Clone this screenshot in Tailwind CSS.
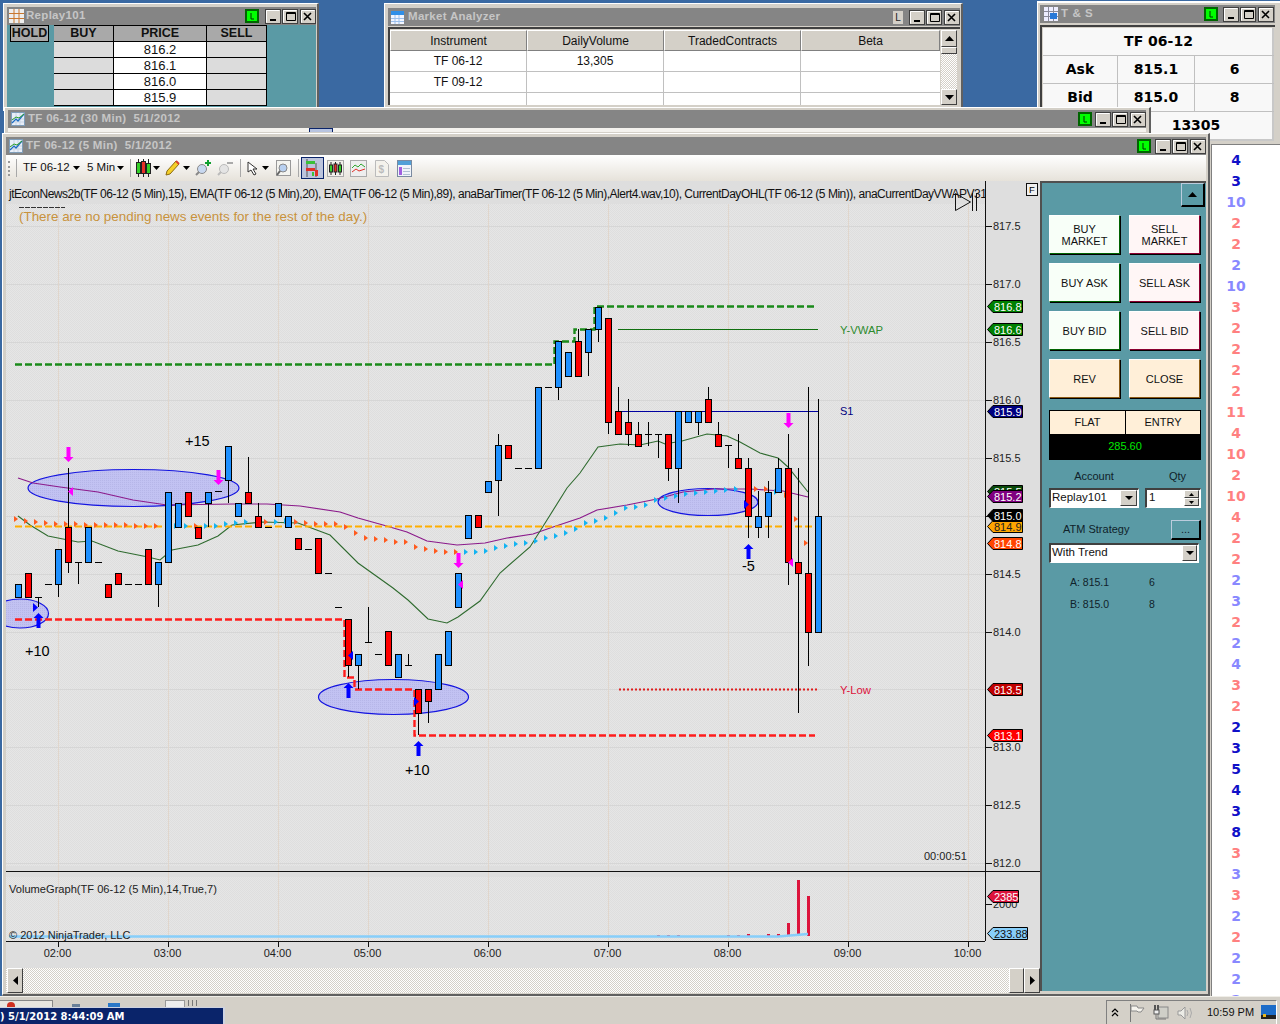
<!DOCTYPE html>
<html lang="en">
<head>
  <meta charset="UTF-8" />
  <title>NinjaTrader Workspace</title>
  <script src="https://cdn.jsdelivr.net/npm/@tailwindcss/browser@4"></script>
</head>
<body class="m-0 overflow-hidden bg-[#3a69a2] font-['Liberation_Sans',Arial,sans-serif] text-[11px] text-[#111]">
  <!-- shared window buttons -->
  <svg width="0" height="0" class="absolute">
    <defs>
      <symbol id="wb" viewBox="0 0 51 15">
        <g fill="#d4d0c8" stroke="#404040"><rect x=".5" y=".5" width="15" height="14"/><rect x="17.5" y=".5" width="15" height="14"/><rect x="35.5" y=".5" width="15" height="14"/></g>
        <g stroke="#fff" fill="none"><path d="M1.5 13.5v-12h13M18.5 13.5v-12h13M36.5 13.5v-12h13"/></g>
        <path d="M5 10h6v2H5z" fill="#000"/>
        <path d="M21.500 3.500h9v8h-9z M21.500 4.500h9" fill="none" stroke="#000"/>
        <path d="M39 4l7 7M46 4l-7 7" stroke="#000" stroke-width="1.600"/>
      </symbol>
      <symbol id="lg" viewBox="0 0 14 14">
        <rect width="14" height="14" fill="#006400"/><rect x="2" y="2" width="10" height="10" fill="#00ff00"/>
        <path d="M6 4v6h3" fill="none" stroke="#003000"/>
      </symbol>
      <symbol id="chartico" viewBox="0 0 14 14">
        <rect x=".5" y=".5" width="13" height="13" fill="#e8eef8" stroke="#7f9db9"/>
        <path d="M1 7h12M1 10h12M5 1v12M9 1v12" stroke="#c8d4e4"/>
        <path d="M1 11l4-4 2 2 6-7" fill="none" stroke="#1c6cc4" stroke-width="1.200"/>
        <path d="M1 8l4-3 3 1 5-4" fill="none" stroke="#2aa02a"/>
      </symbol>
    </defs>
  </svg>

  <!-- Replay101 SuperDOM -->
  <section class="absolute left-[3px] top-[3px] w-[316px] h-[108px] bg-[#d4d0c8] border-t border-l border-white border-r-2 border-r-[#606060] pl-[3px] pr-[1px] pt-[3px]">
    <header class="h-[18px] bg-[#858585] flex items-center pl-[2px]">
      <svg width="15" height="14" viewBox="0 0 15 14"><rect width="15" height="14" fill="#eee"/><path d="M0 4.500h15M0 9.500h15M5 0v14M10 0v14" stroke="#c9772e"/></svg>
      <span class="ml-[2px] font-bold text-[#c6c6c6] text-[11.500px] tracking-[0.3px]">Replay101</span>
      <svg class="ml-auto mr-[6px]" width="14" height="14"><use href="#lg"/></svg>
      <svg width="51" height="15"><use href="#wb"/></svg>
    </header>
    <div class="h-[90px] bg-[#5a9aa5] flex pl-[3px]">
      <div class="w-[39px] h-[17px] bg-[#a9a9a9] border border-black font-bold text-[12.500px] leading-[15px] text-center">HOLD</div>
      <div class="ml-[5px] w-[213px] grid grid-cols-[59px_94px_60px] grid-rows-[17px_16px_16px_16px_16px] text-center text-[13px] leading-[16px]">
        <div class="bg-[#a9a9a9] border-y border-black font-bold text-[12.500px] leading-[15px]">BUY</div>
        <div class="bg-[#a9a9a9] border border-black font-bold text-[12.500px] leading-[15px]">PRICE</div>
        <div class="bg-[#a9a9a9] border-y border-r border-black font-bold text-[12.500px] leading-[15px]">SELL</div>
        <div class="bg-[#dcdcdc] border-b border-black"></div><div class="bg-white border-x border-b border-black">816.2</div><div class="bg-[#dcdcdc] border-b border-r border-black"></div>
        <div class="bg-[#dcdcdc] border-b border-black"></div><div class="bg-white border-x border-b border-black">816.1</div><div class="bg-[#dcdcdc] border-b border-r border-black"></div>
        <div class="bg-[#dcdcdc] border-b border-black"></div><div class="bg-white border-x border-b border-black">816.0</div><div class="bg-[#dcdcdc] border-b border-r border-black"></div>
        <div class="bg-[#dcdcdc] border-b border-black"></div><div class="bg-white border-x border-b border-black">815.9</div><div class="bg-[#dcdcdc] border-b border-r border-black"></div>
      </div>
    </div>
  </section>

  <!-- Market Analyzer -->
  <section class="absolute left-[384px] top-[3px] w-[579px] h-[104px] bg-[#d4d0c8] border-t border-l border-white border-r-2 border-r-[#606060] pl-[3px] pr-[1px] pt-[4px]">
    <header class="h-[18px] bg-[#858585] flex items-center pl-[3px]">
      <svg width="13" height="13" viewBox="0 0 13 13"><rect width="13" height="13" fill="#f2f6ff"/><rect width="13" height="4" fill="#2f8fe8"/><path d="M0 7.500h13M0 10.500h13M4 4v9M8 4v9" stroke="#9cc0ec"/></svg>
      <span class="ml-[4px] font-bold text-[#c6c6c6] text-[11.500px] tracking-[0.3px]">Market Analyzer</span>
      <span class="ml-auto mr-[6px] w-[10px] h-[13px] bg-[#d4d0c8] text-[10px] leading-[14px] text-center text-[#222]">L</span>
      <svg width="51" height="15"><use href="#wb"/></svg>
    </header>
    <div class="flex h-[78px] mt-[1px] bg-[#d4d0c8] border-t-2 border-l-2 border-[#404040] pt-[1px]">
      <div class="w-[550px] bg-white overflow-hidden">
        <div class="grid grid-cols-[137px_137px_137px_139px] grid-rows-[21px_21px_21px_21px] text-center text-[12px] leading-[21px]">
          <div class="bg-[#d4d0c8] border border-t-white border-l-white border-[#808080] leading-[20px]">Instrument</div><div class="bg-[#d4d0c8] border border-t-white border-l-white border-[#808080] leading-[20px]">DailyVolume</div><div class="bg-[#d4d0c8] border border-t-white border-l-white border-[#808080] leading-[20px]">TradedContracts</div><div class="bg-[#d4d0c8] border border-t-white border-l-white border-[#808080] leading-[20px]">Beta</div>
          <div class="border-r border-b border-[#c0c0c0]">TF 06-12</div><div class="border-r border-b border-[#c0c0c0]">13,305</div><div class="border-r border-b border-[#c0c0c0]"></div><div class="border-b border-[#c0c0c0]"></div>
          <div class="border-r border-b border-[#c0c0c0]">TF 09-12</div><div class="border-r border-b border-[#c0c0c0]"></div><div class="border-r border-b border-[#c0c0c0]"></div><div class="border-b border-[#c0c0c0]"></div>
          <div class="border-r border-[#c0c0c0]"></div><div class="border-r border-[#c0c0c0]"></div><div class="border-r border-[#c0c0c0]"></div><div></div>
        </div>
      </div>
      <div class="w-[16px] flex flex-col bg-[repeating-conic-gradient(#ffffff_0_25%,#d4d0c8_0_50%)] bg-[length:2px_2px] ml-[1px]">
        <div class="h-[17px] bg-[#d4d0c8] border border-t-white border-l-white border-[#404040] flex items-center justify-center"><svg width="9" height="5"><path d="M4.500 0L9 5H0z"/></svg></div>
        <div class="h-[7px] bg-[#d4d0c8] border border-t-white border-l-white border-[#404040]"></div>
        <div class="mt-auto h-[16px] bg-[#d4d0c8] border border-t-white border-l-white border-[#404040] flex items-center justify-center"><svg width="9" height="5"><path d="M0 0h9L4.500 5z"/></svg></div>
      </div>
    </div>
  </section>

  <!-- T & S -->
  <section class="absolute left-[1037px] top-[1px] w-[243px] h-[996px] bg-[#d4d0c8] border-t-2 border-l border-white pl-[2px] pt-[2px]">
    <header class="h-[18px] w-[235px] bg-[#858585] flex items-center pl-[4px] pr-[1px]">
      <svg width="14" height="14" viewBox="0 0 14 14"><rect width="14" height="14" fill="#eef"/><path d="M0 4.500h14M0 9.500h14M4.500 0v14M9.500 0v14" stroke="#8a8a9a"/><rect x="6" y="6" width="7" height="6" fill="#2878d8"/></svg>
      <span class="ml-[3px] font-bold text-[#c6c6c6] text-[11.500px] tracking-[0.6px]">T &amp; S</span>
      <svg class="ml-auto mr-[5px]" width="14" height="14"><use href="#lg"/></svg>
      <svg width="51" height="15"><use href="#wb"/></svg>
    </header>
    <div class="mt-[2px] w-[235px] h-[118px] border-t-2 border-l-2 border-[#404040] pl-[1px] pt-[1px]">
      <div class="w-[231px] h-[113px] grid grid-cols-[75px_77px_79px] grid-rows-[28px_28px_28px_29px] bg-[#f8f8f8] border-r-2 border-b-2 border-[#c8c8c8] font-['DejaVu_Sans',sans-serif] font-bold text-[14px] leading-[27px] text-center text-black">
        <div class="col-span-3 border-b border-[#c0c0c0]">TF 06-12</div>
        <div class="border-r border-b border-[#c0c0c0]">Ask</div><div class="border-r border-b border-[#c0c0c0]">815.1</div><div class="border-b border-[#c0c0c0]">6</div>
        <div class="border-r border-b border-[#c0c0c0]">Bid</div><div class="border-r border-b border-[#c0c0c0]">815.0</div><div class="border-b border-[#c0c0c0]">8</div>
        <div class="border-r border-[#c0c0c0]"></div><div class="col-span-2">13305</div>
      </div>
    </div>
    <div class="absolute left-[173px] top-[141px] w-[69px] h-[853px] bg-white border-l border-t border-[#808080] overflow-hidden">
      <div id="ticks" class="w-[48px] flex flex-col items-center font-['DejaVu_Sans',sans-serif] font-bold text-[14px] leading-[21px] pt-[5px]"></div>
    </div>
  </section>

  <!-- TF 06-12 30 Min, behind -->
  <section class="absolute left-[4px] top-[107px] w-[1147px] h-[30px] bg-[#d4d0c8] border-t border-l border-white border-r-2 border-r-[#606060] px-[3px] pt-[2px]">
    <header class="h-[18px] bg-[#858585] flex items-center pl-[3px]">
      <svg width="14" height="14"><use href="#chartico"/></svg>
      <span class="ml-[3px] font-bold text-[#c6c6c6] text-[11.500px] tracking-[0.3px] whitespace-pre">TF 06-12 (30 Min)  5/1/2012</span>
      <svg class="ml-auto mr-[3px]" width="14" height="14"><use href="#lg"/></svg>
      <svg width="51" height="15"><use href="#wb"/></svg>
    </header>
    <div class="h-[4px] bg-[#f4f2ee]"><div class="ml-[301px] w-[24px] h-[4px] bg-[#b8c4e0] border-t border-x border-[#0a246a]"></div></div>
  </section>

  <!-- TF 06-12 5 Min, front -->
  <section class="absolute left-[2px] top-[133px] w-[1208px] h-[863px] bg-[#d4d0c8] border-t border-white border-l border-r-2 border-r-[#606060] border-b-2 border-b-[#606060] pl-[3px] pr-[1px] pt-[3px] flex flex-col">
    <header class="h-[18px] shrink-0 w-[1200px] bg-[#858585] flex items-center pl-[3px]">
      <svg width="14" height="14"><use href="#chartico"/></svg>
      <span class="ml-[3px] font-bold text-[#c6c6c6] text-[11.500px] tracking-[0.3px] whitespace-pre">TF 06-12 (5 Min)  5/1/2012</span>
      <svg class="ml-auto mr-[4px]" width="14" height="14"><use href="#lg"/></svg>
      <svg width="51" height="15"><use href="#wb"/></svg>
    </header>
    <!-- toolbar -->
    <div class="h-[26px] shrink-0 w-[1200px] bg-gradient-to-b from-white to-[#e6e2da] flex items-center text-[11.500px] text-[#111] whitespace-nowrap">
      <span class="ml-[2px] h-[15px] w-[2px] border-l-2 border-dotted border-[#999]"></span>
      <span class="ml-[6px] h-[18px] w-px bg-[#a8a8a8]"></span>
      <span class="ml-[6px] w-[44px]">TF 06-12</span>
      <svg class="ml-[6px]" width="7" height="4"><path d="M0 0h7L3.500 4z"/></svg>
      <span class="ml-[7px] w-[25px]">5 Min</span>
      <svg class="ml-[5px]" width="7" height="4"><path d="M0 0h7L3.500 4z"/></svg>
      <span class="ml-[6px] h-[18px] w-px bg-[#a8a8a8]"></span>
      <svg class="ml-[5px]" width="16" height="18" viewBox="0 0 16 18"><path d="M2.500 0v18M7.500 0v18M12.500 0v18" stroke="#222"/><rect x=".5" y="3.500" width="4" height="11" fill="#35d028" stroke="#222"/><rect x="5.500" y="2.500" width="4" height="12" fill="#e83028" stroke="#222"/><rect x="10.500" y="4.500" width="4" height="10" fill="#35d028" stroke="#222"/></svg>
      <svg class="ml-[1px]" width="7" height="4"><path d="M0 0h7L3.500 4z"/></svg>
      <svg class="ml-[5px]" width="15" height="16" viewBox="0 0 15 16"><path d="M2 11L11 1l3 3L5 14l-4 1z" fill="#f6d028" stroke="#8a6a10"/><path d="M11 1l3 3" stroke="#d84030" stroke-width="2"/></svg>
      <svg class="ml-[3px]" width="7" height="4"><path d="M0 0h7L3.500 4z"/></svg>
      <svg class="ml-[5px]" width="17" height="16" viewBox="0 0 17 16"><circle cx="7" cy="9" r="4.500" fill="#c8d8f0" stroke="#8a8a8a"/><path d="M4 12l-3 3" stroke="#888" stroke-width="2"/><path d="M13 0v6M10 3h6" stroke="#10a030" stroke-width="2"/></svg>
      <svg class="ml-[5px]" width="17" height="16" viewBox="0 0 17 16"><circle cx="7" cy="9" r="4.500" fill="#e4e4e4" stroke="#bbb"/><path d="M4 12l-3 3" stroke="#bbb" stroke-width="2"/><path d="M10 3h6" stroke="#aaa" stroke-width="2"/></svg>
      <span class="ml-[6px] h-[18px] w-px bg-[#a8a8a8]"></span>
      <svg class="ml-[6px]" width="13" height="15" viewBox="0 0 13 15"><path d="M1 1v10l3-2 3 5 2-1-3-5h4z" fill="#fff" stroke="#333"/></svg>
      <svg class="ml-[2px]" width="7" height="4"><path d="M0 0h7L3.500 4z"/></svg>
      <svg class="ml-[6px]" width="17" height="17" viewBox="0 0 17 17"><rect x="1.500" y=".5" width="14" height="15" fill="#f4f4f0" stroke="#999"/><circle cx="8" cy="8" r="4" fill="#b8d0f0" stroke="#888"/><path d="M5 11l-3 4" stroke="#666" stroke-width="2"/></svg>
      <span class="ml-[6px] h-[18px] w-px bg-[#a8a8a8]"></span>
      <span class="ml-[2px] w-[23px] h-[22px] bg-[#bcc4dc] border border-[#0a246a] flex items-center justify-center">
        <svg width="16" height="18" viewBox="0 0 16 18"><path d="M2 0v18M11 4v14" stroke="#555"/><rect x="1" y="2" width="9" height="3" fill="#3bc038"/><rect x="1" y="9" width="9" height="3" fill="#e03028"/><rect x="10" y="11" width="3" height="6" fill="#e03028"/><rect x="7" y="13" width="2" height="4" fill="#3bc038"/></svg>
      </span>
      <svg class="ml-[3px]" width="17" height="17" viewBox="0 0 17 17"><rect x=".5" y=".5" width="16" height="16" fill="#f2f0ea" stroke="#aaa"/><path d="M4 2v13M8.500 2v13M13 2v13" stroke="#222"/><rect x="2.500" y="5" width="3" height="7" fill="#35d028" stroke="#222"/><rect x="7" y="4" width="3" height="8" fill="#e83028" stroke="#222"/><rect x="11.500" y="5" width="3" height="7" fill="#35d028" stroke="#222"/></svg>
      <svg class="ml-[6px]" width="17" height="17" viewBox="0 0 17 17"><rect x=".5" y=".5" width="16" height="16" fill="#eee" stroke="#aaa"/><path d="M2 8l3-3 3 2 3-3 4 3" fill="none" stroke="#30a830"/><path d="M2 12l4-3 3 2 6-2" fill="none" stroke="#e03028"/></svg>
      <svg class="ml-[8px]" width="14" height="17" viewBox="0 0 14 17"><path d="M.5.5h9l4 4v12H.5z" fill="#f4f2ec" stroke="#bbb"/><text x="3.500" y="13" font-size="10" font-weight="bold" fill="#bbb">$</text></svg>
      <svg class="ml-[8px]" width="15" height="17" viewBox="0 0 15 17"><rect x=".5" y=".5" width="14" height="16" fill="#f0f4fa" stroke="#7a8aa0"/><rect x="1" y="1" width="13" height="4" fill="#50a0d8"/><rect x="2" y="7" width="3" height="8" fill="#a060e0"/><path d="M6 8.500h7M6 11.500h7M6 14.500h7" stroke="#b0c0d4"/></svg>
    </div>

    <div class="flex h-[813px] w-[1203px]">
      <div class="w-[1034px] flex flex-col">
        <svg id="chart" class="block" width="1034" height="787" viewBox="6 181 1034 787">
          <defs>
            <pattern id="dither" width="2" height="2" patternUnits="userSpaceOnUse"><rect width="2" height="2" fill="#e6e6e6"/><rect width="1" height="1" fill="#dedede"/><rect x="1" y="1" width="1" height="1" fill="#dedede"/></pattern>
            <pattern id="ehatch" width="2" height="2" patternUnits="userSpaceOnUse"><rect width="2" height="2" fill="#c2c2f2"/><rect width="1" height="1" fill="#b6b6e8"/></pattern>
            <clipPath id="plot"><rect x="6" y="181" width="979" height="690"/></clipPath>
          </defs>
          <rect x="6" y="181" width="1034" height="787" fill="#dedede"/>
          <rect x="6" y="204" width="979" height="662" fill="url(#dither)"/>
          <rect x="6" y="877" width="979" height="64" fill="url(#dither)"/>
          <g id="grid"></g>
          <g clip-path="url(#plot)">
            <g id="ellipses" fill="url(#ehatch)" stroke="#1414e0" stroke-width="1.200">
              <ellipse cx="133.500" cy="488" rx="105.500" ry="18.500"/>
              <ellipse cx="20" cy="613.500" rx="28.500" ry="14.500"/>
              <ellipse cx="393.500" cy="697" rx="75" ry="17.500"/>
              <ellipse cx="708" cy="502" rx="50" ry="13.500"/>
            </g>
            <polyline id="ema89" fill="none" stroke="#8b1a8b" stroke-width="1.200"/>
            <polyline id="ema20" fill="none" stroke="#2f6b2f" stroke-width="1.100"/>
            <path d="M15 526.500H813" stroke="#ffae00" stroke-width="2" stroke-dasharray="7 3" fill="none"/>
            <path d="M15 364.500H554.500V341.500H574.500V329.500H594.500V306.500H815" fill="none" stroke="#1a8a1a" stroke-width="2.400" stroke-dasharray="7 3"/>
            <path d="M15 619.500H344.500V677.500H354.500V689.500H414.500V735.500H815" fill="none" stroke="#ff1c1c" stroke-width="2.400" stroke-dasharray="7 3"/>
            <path d="M618 329.500H818" stroke="#107010" fill="none"/>
            <path d="M618 411.500H818" stroke="#0000a0" fill="none"/>
            <path d="M619 689.500H818" stroke="#e01c1c" stroke-width="2" stroke-dasharray="2 2" fill="none"/>
            <g id="tris"></g>
            <g id="candles"></g>
            <g id="marks"></g>
          </g>
          <!-- chart titles -->
          <g>
            <text x="9" y="198" font-size="12" fill="#111" textLength="978" lengthAdjust="spacing" clip-path="url(#plot)">jtEconNews2b(TF 06-12 (5 Min),15), EMA(TF 06-12 (5 Min),20), EMA(TF 06-12 (5 Min),89), anaBarTimer(TF 06-12 (5 Min),Alert4.wav,10), CurrentDayOHL(TF 06-12 (5 Min)), anaCurrentDayVWAPV31</text>
            <path d="M19 207.500h46" stroke="#333" stroke-dasharray="5 1" fill="none"/>
            <text x="19" y="221" font-size="13.400" fill="#c8923c">(There are no pending news events for the rest of the day.)</text>
            <path d="M955.500 193.500V210.500L970.500 202z" fill="none" stroke="#111"/>
            <path d="M972.500 193V211M976.500 193V211" stroke="#111" fill="none"/>
            <text x="185" y="446" font-size="14.500">+15</text>
            <text x="25" y="656" font-size="14.500">+10</text>
            <text x="405" y="775" font-size="14.500">+10</text>
            <text x="742" y="571" font-size="14.500">-5</text>
            <text x="840" y="334" font-size="11.300" fill="#2e8b2e">Y-VWAP</text>
            <text x="840" y="415" fill="#000080">S1</text>
            <text x="840" y="694" font-size="11.300" fill="#dc143c">Y-Low</text>
            <text x="924" y="860" fill="#222">00:00:51</text>
            <text x="9" y="893" font-size="11.100" fill="#222">VolumeGraph(TF 06-12 (5 Min),14,True,7)</text>
            <rect x="1026.500" y="183.500" width="11" height="12" fill="#f0f0f0" stroke="#111"/>
            <text x="1029" y="193" font-size="9.500">F</text>
          </g>
          <g id="vol"></g>
          <text x="9" y="939" fill="#222" font-size="11">© 2012 NinjaTrader, LLC</text>
          <!-- axis lines -->
          <path d="M985.500 181V941M6 871.500H1040M6 941.500H985" stroke="#111" fill="none"/>
          <g id="axis" font-size="11" fill="#222"></g>
          <g id="markers" font-size="11"></g>
        </svg>
        <div class="h-[25px] flex bg-[repeating-conic-gradient(#ffffff_0_25%,#d4d0c8_0_50%)] bg-[length:2px_2px]">
          <div class="w-[16px] bg-[#d4d0c8] border border-t-white border-l-white border-[#404040] flex items-center justify-center ml-[1px]"><svg width="5" height="9"><path d="M5 0v9L0 4.500z"/></svg></div>
          <div class="ml-auto w-[15px] bg-[#d4d0c8] border border-t-white border-l-white border-[#404040]"></div>
          <div class="w-[16px] bg-[#d4d0c8] border border-t-white border-l-white border-[#404040] flex items-center justify-center"><svg width="5" height="9"><path d="M0 0v9l5-4.500z"/></svg></div>
        </div>
      </div>

      <!-- chart trader -->
      <div class="w-[166px] h-[810px] bg-[#5a9aa5] border-l-2 border-t-2 border-[#505050] relative pl-[7px] text-[#111]">
        <div class="absolute left-[139px] top-[0px] w-[24px] h-[24px] bg-[#5a9aa5] border border-t-[#bcd] border-l-[#bcd] border-r-2 border-b-2 border-black flex items-center justify-center"><svg width="9" height="5"><path d="M4.500 0L9 5H0z"/></svg></div>
        <div class="pt-[32px] grid grid-cols-[71px_71px] gap-x-[9px] gap-y-[9px] text-center leading-[12px] text-[11px]">
          <button class="h-[39px] bg-[#f8fff8] border-t border-l border-white border-r border-b border-r-[#006400] border-b-[#006400] shadow-[1px_1px_0_#000]">BUY<br>MARKET</button>
          <button class="h-[39px] bg-[#fff6f6] border-t border-l border-white border-r border-b border-r-[#8b0030] border-b-[#8b0030] shadow-[1px_1px_0_#000]">SELL<br>MARKET</button>
          <button class="h-[39px] bg-[#f8fff8] border-t border-l border-white border-r border-b border-r-[#006400] border-b-[#006400] shadow-[1px_1px_0_#000]">BUY ASK</button>
          <button class="h-[39px] bg-[#fff6f6] border-t border-l border-white border-r border-b border-r-[#8b0030] border-b-[#8b0030] shadow-[1px_1px_0_#000]">SELL ASK</button>
          <button class="h-[39px] bg-[#f8fff8] border-t border-l border-white border-r border-b border-r-[#006400] border-b-[#006400] shadow-[1px_1px_0_#000]">BUY BID</button>
          <button class="h-[39px] bg-[#fff6f6] border-t border-l border-white border-r border-b border-r-[#8b0030] border-b-[#8b0030] shadow-[1px_1px_0_#000]">SELL BID</button>
          <button class="h-[39px] bg-[#ffefd8] border-t border-l border-white border-r border-b border-r-[#8b5a14] border-b-[#8b5a14] shadow-[1px_1px_0_#000]">REV</button>
          <button class="h-[39px] bg-[#ffefd8] border-t border-l border-white border-r border-b border-r-[#8b5a14] border-b-[#8b5a14] shadow-[1px_1px_0_#000]">CLOSE</button>
        </div>
        <div class="mt-[12px] w-[152px] border border-black">
          <div class="h-[23px] flex bg-[#ffefd8] text-[11px] leading-[22px] text-center"><span class="w-[76px] border-r border-black">FLAT</span><span class="flex-1">ENTRY</span></div>
          <div class="h-[25px] bg-black text-[#00e800] text-center leading-[25px] text-[11px]">285.60</div>
        </div>
        <div class="flex mt-[8px] text-[11px] text-[#10222a]"><span class="w-[89px] text-center pl-[1px]">Account</span><span class="ml-[8px] w-[56px] text-center pl-[7px]">Qty</span></div>
        <div class="flex mt-[3px] items-start">
          <div class="w-[90px] h-[20px] bg-white border-t-2 border-l-2 border-[#404040] border-b border-r border-b-white border-r-white flex items-center pl-[1px] text-[11.500px]">Replay101<span class="ml-auto mr-[1px] w-[17px] h-[16px] bg-[#d4d0c8] border border-t-white border-l-white border-[#404040] flex items-center justify-center"><svg width="8" height="4"><path d="M0 0h8L4 4z"/></svg></span></div>
          <div class="ml-[6px] w-[56px] h-[20px] bg-white border-t-2 border-l-2 border-[#404040] border-b border-r border-b-white border-r-white flex items-center pl-[2px] text-[11.500px]">1<span class="ml-auto mr-[1px] w-[15px] h-[16px] flex flex-col"><span class="h-[8px] bg-[#d4d0c8] border border-t-white border-l-white border-[#404040] flex items-center justify-center"><svg width="5" height="3"><path d="M2.500 0L5 3H0z"/></svg></span><span class="h-[8px] bg-[#d4d0c8] border border-t-white border-l-white border-[#404040] flex items-center justify-center"><svg width="5" height="3"><path d="M0 0h5L2.500 3z"/></svg></span></span></div>
        </div>
        <div class="flex items-center h-[20px] mt-[12px] text-[11px] text-[#10222a]"><span class="ml-[14px]">ATM Strategy</span><span class="ml-[auto] mr-[5px] w-[30px] h-[20px] bg-[#5a9aa5] border border-t-[#bcd] border-l-[#bcd] border-r-2 border-b-2 border-black text-center leading-[17px]">...</span></div>
        <div class="mt-[3px] w-[150px] h-[20px] bg-white border-t-2 border-l-2 border-[#404040] border-b border-r border-b-white border-r-white flex items-center pl-[1px] text-[11.500px]">With Trend<span class="ml-auto mr-[1px] w-[15px] h-[16px] bg-[#d4d0c8] border border-t-white border-l-white border-[#404040] flex items-center justify-center"><svg width="8" height="4"><path d="M0 0h8L4 4z"/></svg></span></div>
        <div class="mt-[8px] ml-[21px] flex text-[10.500px] text-[#10222a] leading-[22px]"><span class="w-[79px]">A: 815.1</span><span>6</span></div>
        <div class="ml-[21px] flex text-[10.500px] text-[#10222a] leading-[22px]"><span class="w-[79px]">B: 815.0</span><span>8</span></div>
      </div>
    </div>
  </section>

  <!-- taskbar -->
  <footer class="absolute left-0 top-[996px] w-[1280px] h-[28px] bg-[#d4d0c8] border-t border-[#f0eee8]">
    <div class="absolute left-0 top-[3px] w-[53px] h-[10px] border-t border-r border-[#888] bg-[#e8e6e0]"><span class="absolute left-[7px] top-[1px] w-[8px] h-[5px] bg-[#d03020] rounded-t-full"></span></div>
    <span class="absolute left-[72px] top-[7px] w-[8px] h-[3px] bg-[#6a8098]"></span>
    <span class="absolute left-[108px] top-[6px] w-[12px] h-[4px] bg-[#2a78c8]"></span>
    <div class="absolute left-[165px] top-[3px] w-[20px] h-[10px] border-t border-x border-[#999] bg-[#eee]"></div>
    <div class="absolute left-[188px] top-[3px] w-[9px] h-[6px] border-x border-[#777] flex justify-center"><span class="w-px h-[6px] bg-[#777]"></span></div>
    <div class="absolute left-0 top-[10px] w-[225px] h-[18px] bg-[#0a246a] border-t border-r-2 border-white/80 font-['DejaVu_Sans',sans-serif] font-bold text-white text-[10px] leading-[17px] whitespace-pre overflow-hidden">) 5/1/2012 8:44:09 AM</div>
    <div class="absolute left-[1106px] top-[3px] w-[171px] h-[24px] border-t border-l border-[#808080] border-r border-r-white flex items-center">
      <svg class="ml-[4px]" width="8" height="10" viewBox="0 0 8 10"><path d="M1 4l3-3 3 3M1 8l3-3 3 3" fill="none" stroke="#000" stroke-width="1.200"/></svg>
      <svg class="ml-[10px]" width="16" height="18" viewBox="0 0 16 18"><path d="M1.500 0v18" stroke="#777"/><path d="M2 2h6l1 2h6l-3 4H9L8 7H2z" fill="#f6f4ee" stroke="#888"/></svg>
      <svg class="ml-[8px]" width="16" height="18" viewBox="0 0 16 18"><rect x="5" y="3" width="10" height="11" fill="#cfcfc8" stroke="#888"/><path d="M2 1v8M5 1v5" stroke="#555" stroke-width="2"/><rect x="1" y="6" width="5" height="4" fill="#eee" stroke="#555"/><path d="M3 10v5h10" fill="none" stroke="#777"/></svg>
      <svg class="ml-[8px]" width="16" height="18" viewBox="0 0 16 18"><path d="M1 7h3l4-4v12l-4-4H1z" fill="#ecece6" stroke="#999"/><path d="M10 6q2 3 0 6M13 4q3 5 0 10" fill="none" stroke="#aaa"/></svg>
      <span class="ml-[14px] w-[45px] text-[11px] text-[#111] whitespace-nowrap">10:59 PM</span>
      <svg class="ml-[9px]" width="15" height="16" viewBox="0 0 15 16"><rect width="15" height="14" fill="#1c6cc8"/><rect y="10" width="15" height="4" fill="#222"/><rect x="2" y="9" width="3" height="3" fill="#e8b820"/></svg>
    </div>
  </footer>

  <script>
    const NS = 'http://www.w3.org/2000/svg';
    const el = (parent, tag, attrs, text) => {
      const n = document.createElementNS(NS, tag);
      for (const k in attrs) n.setAttribute(k, attrs[k]);
      if (text !== undefined) n.textContent = text;
      parent.appendChild(n);
      return n;
    };
    const $ = id => document.getElementById(id);

    // grid and axes
    const timeX = [[58,'02:00'],[168,'03:00'],[278,'04:00'],[368,'05:00'],[488,'06:00'],[608,'07:00'],[728,'08:00'],[848,'09:00'],[968,'10:00']];
    const priceY = [[226,'817.5'],[284,'817.0'],[342,'816.5'],[400,'816.0'],[458,'815.5'],[516,'815.0'],[574,'814.5'],[632,'814.0'],[689,''],[747,'813.0'],[805,'812.5'],[863,'812.0']];
    priceY.forEach(([y, t]) => {
      el($('grid'), 'path', { d: `M6 ${y + .5}H985`, stroke: '#d6d6d6', fill: 'none' });
      if (t) {
        el($('axis'), 'path', { d: `M986 ${y + .5}h6`, stroke: '#111' });
        el($('axis'), 'text', { x: 993, y: y + 4 }, t);
      }
    });
    timeX.forEach(([x, t]) => {
      el($('grid'), 'path', { d: `M${x + .5} 204V941`, stroke: '#e0d6cc', fill: 'none' });
      el($('axis'), 'path', { d: `M${x + .5} 941v6`, stroke: '#111' });
      el($('axis'), 'text', { x: x - .5, y: 957, 'text-anchor': 'middle' }, t);
    });
    el($('axis'), 'path', { d: 'M986 904.500h6', stroke: '#111' });
    el($('axis'), 'text', { x: 993, y: 908 }, '2000');

    // moving averages
    $('ema89').setAttribute('points', '18,478 33,483 60,487 98,492 133,500 167,505 233,504 267,504 300,506 340,512 358,518 383,525 407,532 427,541 457,545 485,543 507,538 533,534 553,527 580,518 597,510 627,505 657,499 683,492 713,489 750,489 783,491 808,497');
    $('ema20').setAttribute('points', '18,516 30,525 48,536 78,542 92,541 118,551 148,557 160,560 172,550 198,545 218,536 232,525 262,522 298,523 330,535 358,563 393,588 408,600 428,619 447,623 458,617 480,601 500,573 530,547 547,520 567,488 580,473 598,447 620,444 640,445 658,441 665,444 682,441 707,434 727,436 740,442 760,453 778,458 788,467 808,492');

    // trend triangles, one per bar
    const O = '#ff5a1e', C = '#12b4f2';
    const tris = [[16,519,O],[26,521,O],[36,522,O],[46,523,O],[56,524,O],[66,524,O],[76,524,O],[86,525,O],[96,525,O],[106,525,O],[116,525,O],[126,525,O],[136,526,O],[146,526,O],[156,526,O],[176,526,C],[186,526,C],[196,526,O],[206,526,C],[216,526,C],[226,524,C],[236,523,C],[246,522,C],[266,522,O],[276,522,C],[286,521,C],[296,522,O],[306,523,O],[316,524,O],[326,524,O],[336,524,O],[346,527,O],[356,533,O],[366,538,O],[376,539,O],[386,540,O],[396,542,O],[406,542,O],[416,547,O],[426,549,O],[436,551,O],[446,552,O],[456,552,O],[466,552,C],[476,552,C],[486,551,C],[496,548,C],[506,546,C],[516,544,C],[526,543,C],[536,541,C],[546,538,C],[556,536,C],[566,533,C],[576,529,C],[586,523,C],[596,521,C],[606,518,C],[616,513,C],[626,508,C],[636,507,C],[646,505,C],[656,500,C],[666,498,C],[676,496,C],[686,494,C],[696,493,C],[706,492,C],[716,491,C],[726,490,C],[736,489,C],[756,489,O],[766,489,O],[776,492,C],[786,495,O],[796,519,O],[806,543,O]];
    tris.forEach(([x, y, c]) => el($('tris'), 'path', { d: `M${x - 2} ${y - 3}L${x + 2} ${y}L${x - 2} ${y + 3}z`, fill: c }));

    // bars: [x, bodyTop, bodyBottom, wickTop, wickBottom, colour]
    const B = '#1e90ff', R = '#ff0000';
    const bars = [[18,584,597,0,0,B],[28,573,597,0,0,R],[58,549,584,0,597,B],[68,527,562,468,573,R],[88,527,562,0,0,B],[108,584,597,0,0,R],[118,573,584,0,0,R],[148,549,584,0,0,R],[158,562,584,0,607,B],[168,492,562,0,0,B],[178,503,527,0,0,B],[188,492,516,0,0,R],[198,527,538,0,0,R],[208,492,503,0,527,B],[228,446,480,0,503,B],[238,503,516,0,0,B],[248,492,503,457,0,R],[258,516,527,503,0,R],[278,503,516,0,0,B],[288,516,527,0,0,B],[298,538,549,0,0,R],[318,538,573,0,0,R],[348,619,665,0,677,R],[358,654,665,0,689,B],[388,631,665,0,0,R],[398,654,677,0,0,B],[418,689,713,0,735,R],[428,689,701,0,723,R],[438,654,689,0,0,B],[448,631,665,0,0,B],[458,573,607,0,0,B],[468,515,538,0,0,B],[478,515,527,0,0,R],[488,481,492,0,0,B],[498,445,480,434,516,B],[508,445,458,0,0,R],[538,387,468,0,0,B],[558,341,387,0,400,B],[568,352,376,0,0,B],[578,341,376,329,0,R],[588,329,352,0,376,B],[598,307,329,0,342,B],[608,318,422,0,434,R],[618,411,434,387,0,R],[628,422,434,399,446,R],[638,434,446,422,0,R],[668,434,468,0,481,R],[678,411,468,0,503,B],[688,411,422,0,0,B],[698,411,422,0,435,B],[708,399,422,387,0,R],[718,434,446,422,0,R],[738,458,468,434,0,R],[748,468,516,458,538,R],[758,516,527,491,538,B],[768,492,516,481,538,B],[778,468,492,458,0,B],[788,468,562,434,585,R],[798,562,573,468,713,R],[808,573,632,387,666,R],[818,516,632,399,0,B]];
    // dojis: [x, y, wickTop, wickBottom]
    const dojis = [[38,597,597,607],[48,584,584,584],[78,562,562,584],[98,562,562,562],[128,584,584,584],[138,584,584,584],[218,491,491,491],[268,527,527,527],[308,549,549,549],[328,573,573,573],[338,607,607,607],[368,642,607,642],[378,654,654,654],[408,665,654,665],[518,468,468,468],[528,468,468,468],[548,387,387,387],[648,434,422,446],[658,434,434,458],[728,445,445,468]];
    bars.forEach(([x, t, b, wt, wb, c]) => {
      if (wt) el($('candles'), 'path', { d: `M${x + .5} ${wt}V${t}`, stroke: '#000' });
      if (wb) el($('candles'), 'path', { d: `M${x + .5} ${b}V${wb}`, stroke: '#000' });
      el($('candles'), 'rect', { x: x - 2.5, y: t + .5, width: 6, height: b - t, fill: c, stroke: '#000' });
    });
    dojis.forEach(([x, y, wt, wb]) => {
      el($('candles'), 'path', { d: `M${x - 3} ${y + .5}h7`, stroke: '#000' });
      if (wb > wt) el($('candles'), 'path', { d: `M${x + .5} ${wt}V${wb}`, stroke: '#000' });
    });

    // entry and exit arrows
    const down = (x, y) => el($('marks'), 'path', { d: `M${x - 1.500} ${y}h4v10h3l-5 5 -5 -5h3z`, fill: '#ff00ff' });
    const up = (x, y) => el($('marks'), 'path', { d: `M${x - 1.500} ${y + 15}h4v-10h3l-5 -5 -5 5h3z`, fill: '#0000ff' });
    [[68,447],[218,470],[458,553],[788,413]].forEach(p => down(...p));
    [[38,613],[348,683],[418,741],[748,544]].forEach(p => up(...p));
    [[73,487,'#ff00ff'],[463,580,'#ff00ff'],[793,558,'#ff00ff'],[353,651,'#0000ff']].forEach(([x, y, c]) =>
      el($('marks'), 'path', { d: `M${x} ${y}v9l-5 -4.500z`, fill: c }));
    [[33,603],[414,697],[744,500]].forEach(([x, y]) =>
      el($('marks'), 'path', { d: `M${x} ${y}v9l5 -4.500z`, fill: '#0000ff' }));

    // volume panel
    [[798,880],[808,896],[788,923],[768,934],[778,934],[748,934],[728,935],[738,935],[678,935],[658,935],[668,935]].forEach(([x, y]) =>
      el($('vol'), 'rect', { x: x - 1, y, width: 3, height: 936 - y, fill: '#dc143c' }));
    el($('vol'), 'path', { d: 'M9 936.500H778L808 934', stroke: '#87cefa', 'stroke-width': 2.500, fill: 'none' });

    // price markers
    [[491,'815.5','#0a4a0a','#fff'],[306,'816.8','#008000','#fff'],[329,'816.6','#008000','#fff'],[411,'815.9','#000080','#fff'],[496,'815.2','#800080','#fff'],[526,'814.9','#ffa500','#222'],[515,'815.0','#000000','#fff'],[543,'814.8','#ff4500','#fff'],[689,'813.5','#c00000','#fff'],[735,'813.1','#ff0000','#fff'],[896,'2385','#dc143c','#fff'],[933,'233.88','#87cefa','#111']].forEach(([y, t, c, f]) => {
      const r = t === '233.88' ? 1028 : t === '2385' ? 1019 : 1023;
      el($('markers'), 'path', { d: `M987.500 ${y + .5}L993 ${y - 5.500}H${r - .5}V${y + 6.500}H993z`, fill: c, stroke: '#000' });
      el($('markers'), 'text', { x: 994, y: y + 4.500, fill: f }, t);
    });

    // time and sales sizes: d dark blue, l light blue, p pink
    const tapeColours = { d: 'text-[#1010c8]', l: 'text-[#8888ff]', p: 'text-[#ff8080]' };
    const tape = '4d 3d 10l 2p 2p 2l 10l 3p 2p 2p 2p 2p 11p 4p 10p 2p 10p 4p 2p 2p 2l 3l 2p 2l 4l 3p 2p 2d 3d 5d 4d 3d 8d 3p 3l 3p 2l 2p 2l 2l 2l'.split(' ');
    tape.forEach(t => {
      const s = document.createElement('span');
      s.className = tapeColours[t.slice(-1)];
      s.textContent = t.slice(0, -1);
      $('ticks').appendChild(s);
    });
  </script>
</body>
</html>
